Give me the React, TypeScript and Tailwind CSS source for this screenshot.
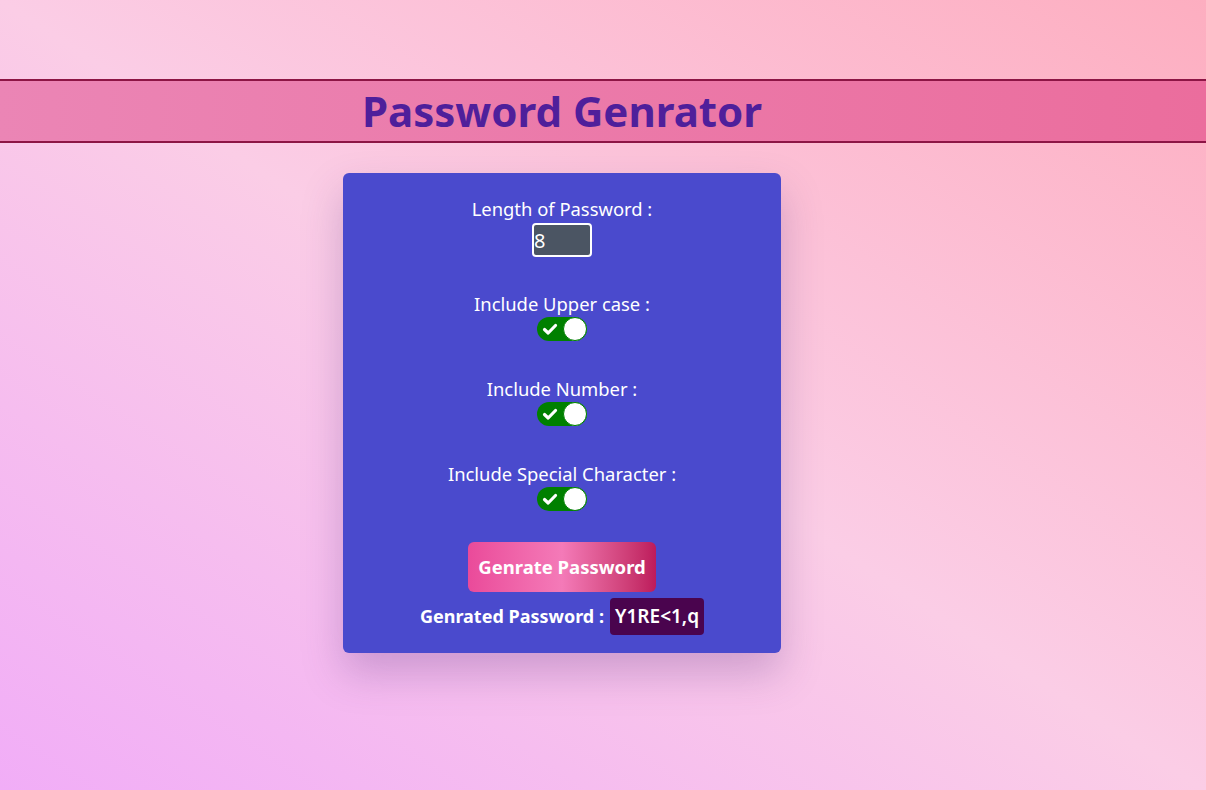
import { useState } from "react";

const FONT = { fontFamily: '"Noto Sans", "Open Sans", sans-serif' };

function Toggle({ on, onClick }: { on: boolean; onClick: () => void }) {
  return (
    <button
      type="button"
      onClick={onClick}
      className={`relative flex h-[24px] w-[50px] items-center rounded-full ${on ? "bg-[#008000]" : "bg-gray-400"}`}
    >
      {on && (
        <svg viewBox="0 0 16 16" className="ml-[5px] h-[16px] w-[16px]">
          <path d="M2.5 8.5 L6.2 12 L13.5 4.5" fill="none" stroke="white" strokeWidth="3.2" strokeLinecap="round" strokeLinejoin="round" />
        </svg>
      )}
      <span
        className={`absolute top-0 h-[24px] w-[24px] rounded-full border border-[#008000] bg-white ${on ? "right-0" : "left-0"}`}
      />
    </button>
  );
}

export default function App() {
  const [length, setLength] = useState("8");
  const [upper, setUpper] = useState(true);
  const [num, setNum] = useState(true);
  const [special, setSpecial] = useState(true);

  return (
    <div
      className="min-h-[790px] w-full bg-gradient-to-tr from-[#f1adf7] via-[#fbcde6] to-[#fdaec0] pt-[79px]"
      style={FONT}
    >
      <div className="border-y-2 border-[#8d1545] bg-gradient-to-r from-[#eb85b5] to-[#eb6d9d]">
        <div className="flex h-[60px] w-[1124px] items-center justify-center">
          <h1 className="text-[42px] leading-none font-bold text-[#4f1f9b]">Password Genrator</h1>
        </div>
      </div>

      <div className="flex w-[1124px] justify-center pt-[30px]">
        <div className="flex w-[438px] flex-col items-center rounded-md bg-[#4a4acd] px-4 pt-[22px] pb-[18px] text-white shadow-[0_20px_40px_rgba(80,40,120,0.25)]">
          <label className="text-[18.4px] leading-[27px]">Length of Password :</label>
          <input
            value={length}
            onChange={(e) => setLength(e.target.value)}
            className="mt-[1px] h-[34px] w-[60px] rounded-[4px] border-2 border-white bg-[#4b5563] px-0 text-[20px] text-white outline-none"
          />

          <label className="mt-[33px] text-[18.4px] leading-[27px]">Include Upper case :</label>
          <Toggle on={upper} onClick={() => setUpper(!upper)} />

          <label className="mt-[34px] text-[18.4px] leading-[27px]">Include Number :</label>
          <Toggle on={num} onClick={() => setNum(!num)} />

          <label className="mt-[34px] text-[18.4px] leading-[27px]">Include Special Character :</label>
          <Toggle on={special} onClick={() => setSpecial(!special)} />

          <button className="mt-[31px] h-[50px] w-[188px] rounded-md bg-gradient-to-r from-[#ea4a9a] via-[#f47ab8] to-[#bd1a5c] text-[18.5px] font-bold text-white">
            Genrate Password
          </button>

          <div className="mt-[6px] flex items-center gap-[6px]">
            <span className="text-[18px] font-bold">Genrated Password :</span>
            <span className="flex h-[37px] items-center rounded-[4px] bg-[#4a044e] px-[5px] text-[19px] font-semibold">
              Y1RE&lt;1,q
            </span>
          </div>
        </div>
      </div>
    </div>
  );
}
